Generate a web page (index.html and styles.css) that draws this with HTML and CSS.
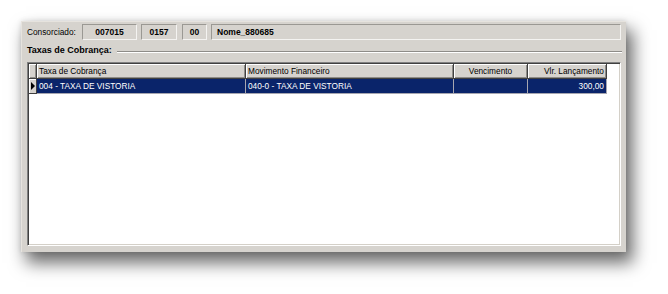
FILE: index.html
```html
<!DOCTYPE html>
<html>
<head>
<meta charset="utf-8">
<link rel="stylesheet" href="styles.css">
</head>
<body>
<div class="stage">
<div class="window">
  <div class="toprow">
    <span class="label">Consorciado:</span>
    <span class="field f1">007015</span>
    <span class="field f2">0157</span>
    <span class="field f3">00</span>
    <span class="field f4">Nome_880685</span>
  </div>
  <div class="group">
    <span class="group-title">Taxas de Cobrança:</span>
    <span class="group-line"></span>
  </div>
  <div class="grid">
    <div class="row head">
      <div class="cell ind"></div>
      <div class="cell c1">Taxa de Cobrança</div>
      <div class="cell c2">Movimento Financeiro</div>
      <div class="cell c3 center">Vencimento</div>
      <div class="cell c4 right">Vlr. Lançamento</div>
    </div>
    <div class="row data">
      <div class="cell ind"><span class="arrow"></span></div>
      <div class="cell c1">004 - TAXA DE VISTORIA</div>
      <div class="cell c2">040-0 - TAXA DE VISTORIA</div>
      <div class="cell c3"></div>
      <div class="cell c4 right">300,00</div>
    </div>
  </div>
</div>
</div>
</body>
</html>
```
FILE: styles.css
```css
html, body {
  margin: 0;
  padding: 0;
  background: #ffffff;
}
body {
  font-family: "Liberation Sans", Arial, sans-serif;
  font-size: 8.3px;
  color: #000;
}
.stage {
  box-sizing: border-box;
  width: 668px;
  height: 294px;
  padding: 21px 0 0 21px;
  background: #ffffff;
}
.window {
  box-sizing: border-box;
  width: 605px;
  height: 231px;
  background: #d6d3ce;
  border-top: 1px solid #e6e3de;
  border-left: 1px solid #e6e3de;
  padding: 2px 5px 6px 5px;
  box-shadow: 6px 10px 16px 1px rgba(0, 0, 0, 0.58), 0 0 5px rgba(0, 0, 0, 0.12);
  display: flex;
  flex-direction: column;
}
.toprow {
  display: flex;
  align-items: center;
  height: 16px;
}
.label {
  width: 55px;
}
.field {
  box-sizing: border-box;
  height: 16px;
  line-height: 14px;
  font-weight: bold;
  font-size: 8.5px;
  text-align: center;
  border-top: 1px solid #9a9893;
  border-left: 1px solid #9a9893;
  border-right: 1px solid #f4f3f1;
  border-bottom: 1px solid #f4f3f1;
}
.f1 { width: 55px; }
.f2 { width: 36px; margin-left: 4px; }
.f3 { width: 25px; margin-left: 5px; }
.f4 { flex: 1; margin-left: 4px; text-align: left; padding-left: 5px; }
.group {
  display: flex;
  align-items: center;
  height: 14px;
  margin-top: 3px;
}
.group-title {
  font-weight: bold;
  font-size: 9px;
  padding-right: 5px;
}
.group-line {
  flex: 1;
  height: 0;
  margin-top: 3px;
  margin-right: -1px;
  border-top: 1px solid #8e8c88;
  border-bottom: 1px solid #ffffff;
}
.grid {
  box-sizing: border-box;
  flex: 1;
  margin-top: 5px;
  width: 594px;
  background: #ffffff;
  border-top: 1px solid #808080;
  border-left: 1px solid #808080;
  border-right: 1px solid #ffffff;
  border-bottom: 1px solid #ffffff;
  box-shadow: inset 1px 1px 0 #404040, inset -1px -1px 0 #d4d0c8;
  padding: 1px;
}
.row {
  display: flex;
  height: 15px;
}
.cell {
  box-sizing: border-box;
  height: 15px;
  line-height: 14px;
  padding: 0 2px;
  white-space: nowrap;
  overflow: hidden;
}
.ind { width: 8px; padding: 0; }
.c1 { width: 209px; }
.c2 { width: 208px; }
.c3 { width: 74px; }
.c4 { width: 79px; }
.center { text-align: center; }
.right { text-align: right; }
.head .cell {
  background: #d6d3ce;
  border-right: 1px solid #404040;
  border-bottom: 1px solid #404040;
  box-shadow: inset 1px 1px 0 #ffffff, inset -1px -1px 0 #8e8c88;
}
.data .cell {
  background: #0a246a;
  color: #ffffff;
  border-right: 1px solid #a6a6b0;
  border-bottom: 1px solid #a6a6b0;
}
.data .ind {
  background: #d6d3ce;
  border-right: 1px solid #404040;
  border-bottom: 1px solid #404040;
  box-shadow: inset 1px 1px 0 #ffffff;
  display: flex;
  align-items: center;
  justify-content: center;
}
.arrow {
  width: 0;
  height: 0;
  border-top: 4px solid transparent;
  border-bottom: 4px solid transparent;
  border-left: 4px solid #000;
}
```
